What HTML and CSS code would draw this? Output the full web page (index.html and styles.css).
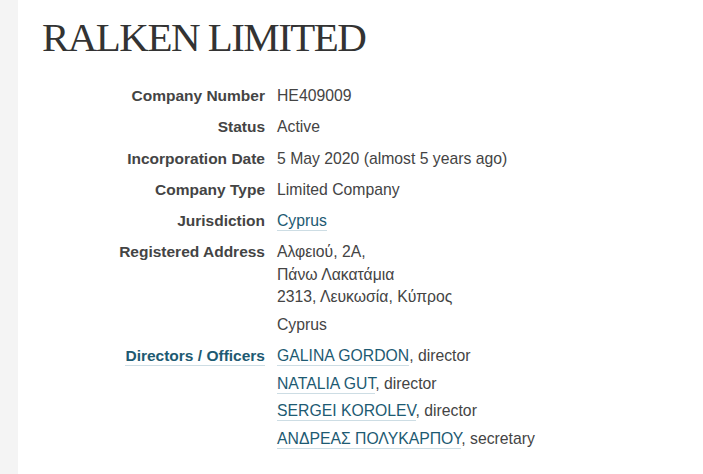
FILE: index.html
```html
<!DOCTYPE html>
<html lang="en">
<head>
<meta charset="utf-8">
<title>RALKEN LIMITED</title>
<link rel="stylesheet" href="styles.css">
</head>
<body>
<div class="page">
  <div class="gutter"></div>
  <main class="main">
    <h1 class="title">RALKEN LIMITED</h1>
    <dl class="attrs">
      <dt>Company Number</dt>
      <dd>HE409009</dd>
      <dt>Status</dt>
      <dd>Active</dd>
      <dt>Incorporation Date</dt>
      <dd>5 May 2020 (almost 5 years ago)</dd>
      <dt>Company Type</dt>
      <dd>Limited Company</dd>
      <dt>Jurisdiction</dt>
      <dd><a class="link" href="#">Cyprus</a></dd>
      <dt>Registered Address</dt>
      <dd>
        <div class="address">
          <div>Αλφειού, 2Α,</div>
          <div>Πάνω Λακατάμια</div>
          <div>2313, Λευκωσία, Κύπρος</div>
        </div>
        <div class="country">Cyprus</div>
      </dd>
      <dt><a class="link" href="#">Directors / Officers</a></dt>
      <dd>
        <ul class="officers">
          <li><a class="link" href="#">GALINA GORDON</a>, director</li>
          <li><a class="link" href="#">NATALIA GUT</a>, director</li>
          <li><a class="link" href="#">SERGEI KOROLEV</a>, director</li>
          <li><a class="link" href="#">ΑΝΔΡΕΑΣ ΠΟΛΥΚΑΡΠΟΥ</a>, secretary</li>
        </ul>
      </dd>
    </dl>
  </main>
</div>
</body>
</html>
```

FILE: styles.css
```css
html, body {
  margin: 0;
  padding: 0;
  background: #ffffff;
}
body {
  font-family: "Liberation Sans", Arial, sans-serif;
  font-size: 15.75px;
  color: #444444;
}
.page {
  display: flex;
  min-height: 474px;
}
.gutter {
  width: 18px;
  flex: none;
  background: #f4f4f4;
}
.main {
  flex: 1;
  padding-left: 24px;
}
.title {
  font-family: "Liberation Serif", "Times New Roman", serif;
  font-weight: normal;
  font-size: 41px;
  letter-spacing: -1.55px;
  line-height: 46px;
  color: #333333;
  margin: 14px 0 0 0;
}
.attrs {
  display: grid;
  grid-template-columns: 223px 1fr;
  column-gap: 12px;
  row-gap: 10.3px;
  margin: 25px 0 0 0;
  line-height: 21px;
}
.attrs dt {
  font-weight: bold;
  font-size: 15.5px;
  text-align: right;
  color: #444444;
}
.attrs dd {
  margin: 0;
}
.link {
  color: #1d5a72;
  text-decoration: none;
  border-bottom: 1px solid #cddde4;
  padding-bottom: 1px;
}
.address {
  line-height: 22.5px;
}
.country {
  margin-top: 5px;
}
.officers {
  list-style: none;
  margin: 0;
  padding: 0;
}
.officers li {
  line-height: 21px;
  margin-bottom: 6.5px;
}
```
